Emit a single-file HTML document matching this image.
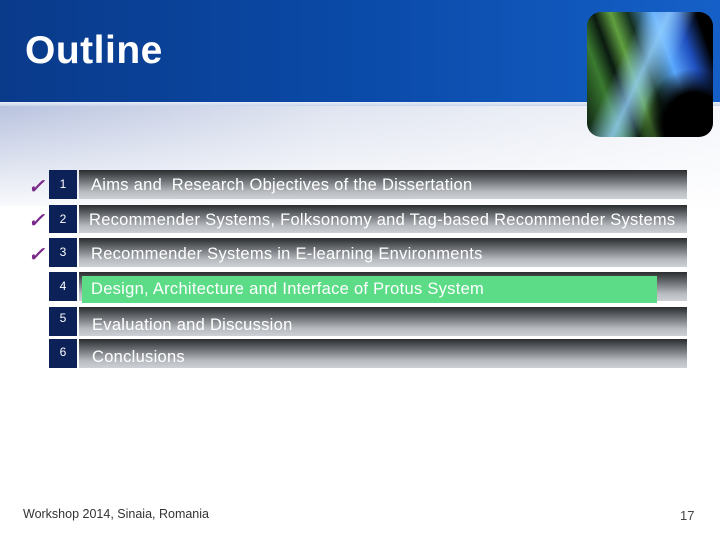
<!DOCTYPE html>
<html><head><style>
body{margin:0;width:720px;height:540px;overflow:hidden;font-family:"Liberation Sans",sans-serif;position:relative;background:#fff}
.hdr{position:absolute;left:0;top:0;width:720px;height:102px;background:linear-gradient(90deg,#0a3a8a 0%,#0a4aa8 50%,#1560c8 100%)}
.line{position:absolute;left:0;top:102px;width:720px;height:4px;background:linear-gradient(#e8eef8,#c8d4ea)}
.sub{position:absolute;left:0;top:106px;width:720px;height:100px;background:linear-gradient(90deg,#b9c3df 0%,#dfe4f0 45%,#f4f6fa 100%)}
.sub2{position:absolute;left:0;top:106px;width:720px;height:110px;background:linear-gradient(rgba(255,255,255,0),#fff)}
h1{position:absolute;left:25px;top:29px;margin:0;color:#fff;font-size:39px;font-weight:bold;font-family:"Liberation Sans",sans-serif;letter-spacing:0.5px}
.pic{position:absolute;left:587px;top:12px;width:126px;height:125px;border-radius:14px;background:
radial-gradient(ellipse at 85% 90%,#000 0%,#000 20%,transparent 35%),
linear-gradient(115deg,transparent 30%,rgba(150,210,255,.8) 45%,transparent 60%),
linear-gradient(70deg,#0a1a10 0%,#3a7a30 20%,#0a1a10 30%,#60a040 40%,#143020 50%,#5aa8ff 65%,#2050c0 78%,#000 90%);overflow:hidden}
.bar{position:absolute;left:79px;width:608px;background:linear-gradient(#2a2c2e 0%,#6a6e72 35%,#b8bcc0 75%,#cdd1d5 100%);color:#fff;font-size:16.5px;box-sizing:border-box;padding-left:12px;white-space:nowrap;letter-spacing:0.28px}
.num{position:absolute;left:49px;width:28px;background:#0b2158;color:#fff;font-size:12px;text-align:center}
.ck{position:absolute;left:28px;color:#7a2a8a;font-size:20px;font-weight:bold;font-style:italic}
.green{position:absolute;left:82px;top:276px;width:575px;height:27px;background:#5ddc88}
.foot{position:absolute;left:23px;top:507px;font-size:12.5px;color:#333}
.pg{position:absolute;left:680px;top:508px;font-size:13px;color:#444}
</style></head><body>
<div class="hdr"></div><div class="line"></div><div class="sub"></div><div class="sub2"></div>
<h1>Outline</h1>
<div class="pic"></div>

<div class="ck" style="top:174px">✓</div><div class="num" style="top:170px;height:29px;line-height:29px">1</div>
<div class="bar" style="top:170px;height:29px;line-height:31px">Aims and &nbsp;Research Objectives of the Dissertation</div>

<div class="ck" style="top:208px">✓</div><div class="num" style="top:205px;height:28px;line-height:28px">2</div>
<div class="bar" style="top:205px;height:28px;line-height:30px;padding-left:10px">Recommender Systems, Folksonomy and Tag-based Recommender Systems</div>

<div class="ck" style="top:242px">✓</div><div class="num" style="top:238px;height:29px;line-height:29px">3</div>
<div class="bar" style="top:238px;height:29px;line-height:33px">Recommender Systems in E-learning Environments</div>

<div class="num" style="top:272px;height:29px;line-height:29px">4</div>
<div class="bar" style="top:272px;height:29px"></div>
<div class="green"></div>
<div style="position:absolute;left:91px;top:280px;color:#fff;font-size:16.5px;letter-spacing:0.28px">Design, Architecture and Interface of Protus System</div>

<div class="num" style="top:307px;height:29px;line-height:23px">5</div>
<div class="bar" style="top:307px;height:29px;line-height:36px;padding-left:13px">Evaluation and Discussion</div>

<div class="num" style="top:339px;height:29px;line-height:26px">6</div>
<div class="bar" style="top:339px;height:29px;line-height:36px;padding-left:13px">Conclusions</div>

<div class="foot">Workshop 2014, Sinaia, Romania</div>
<div class="pg">17</div>
</body></html>
